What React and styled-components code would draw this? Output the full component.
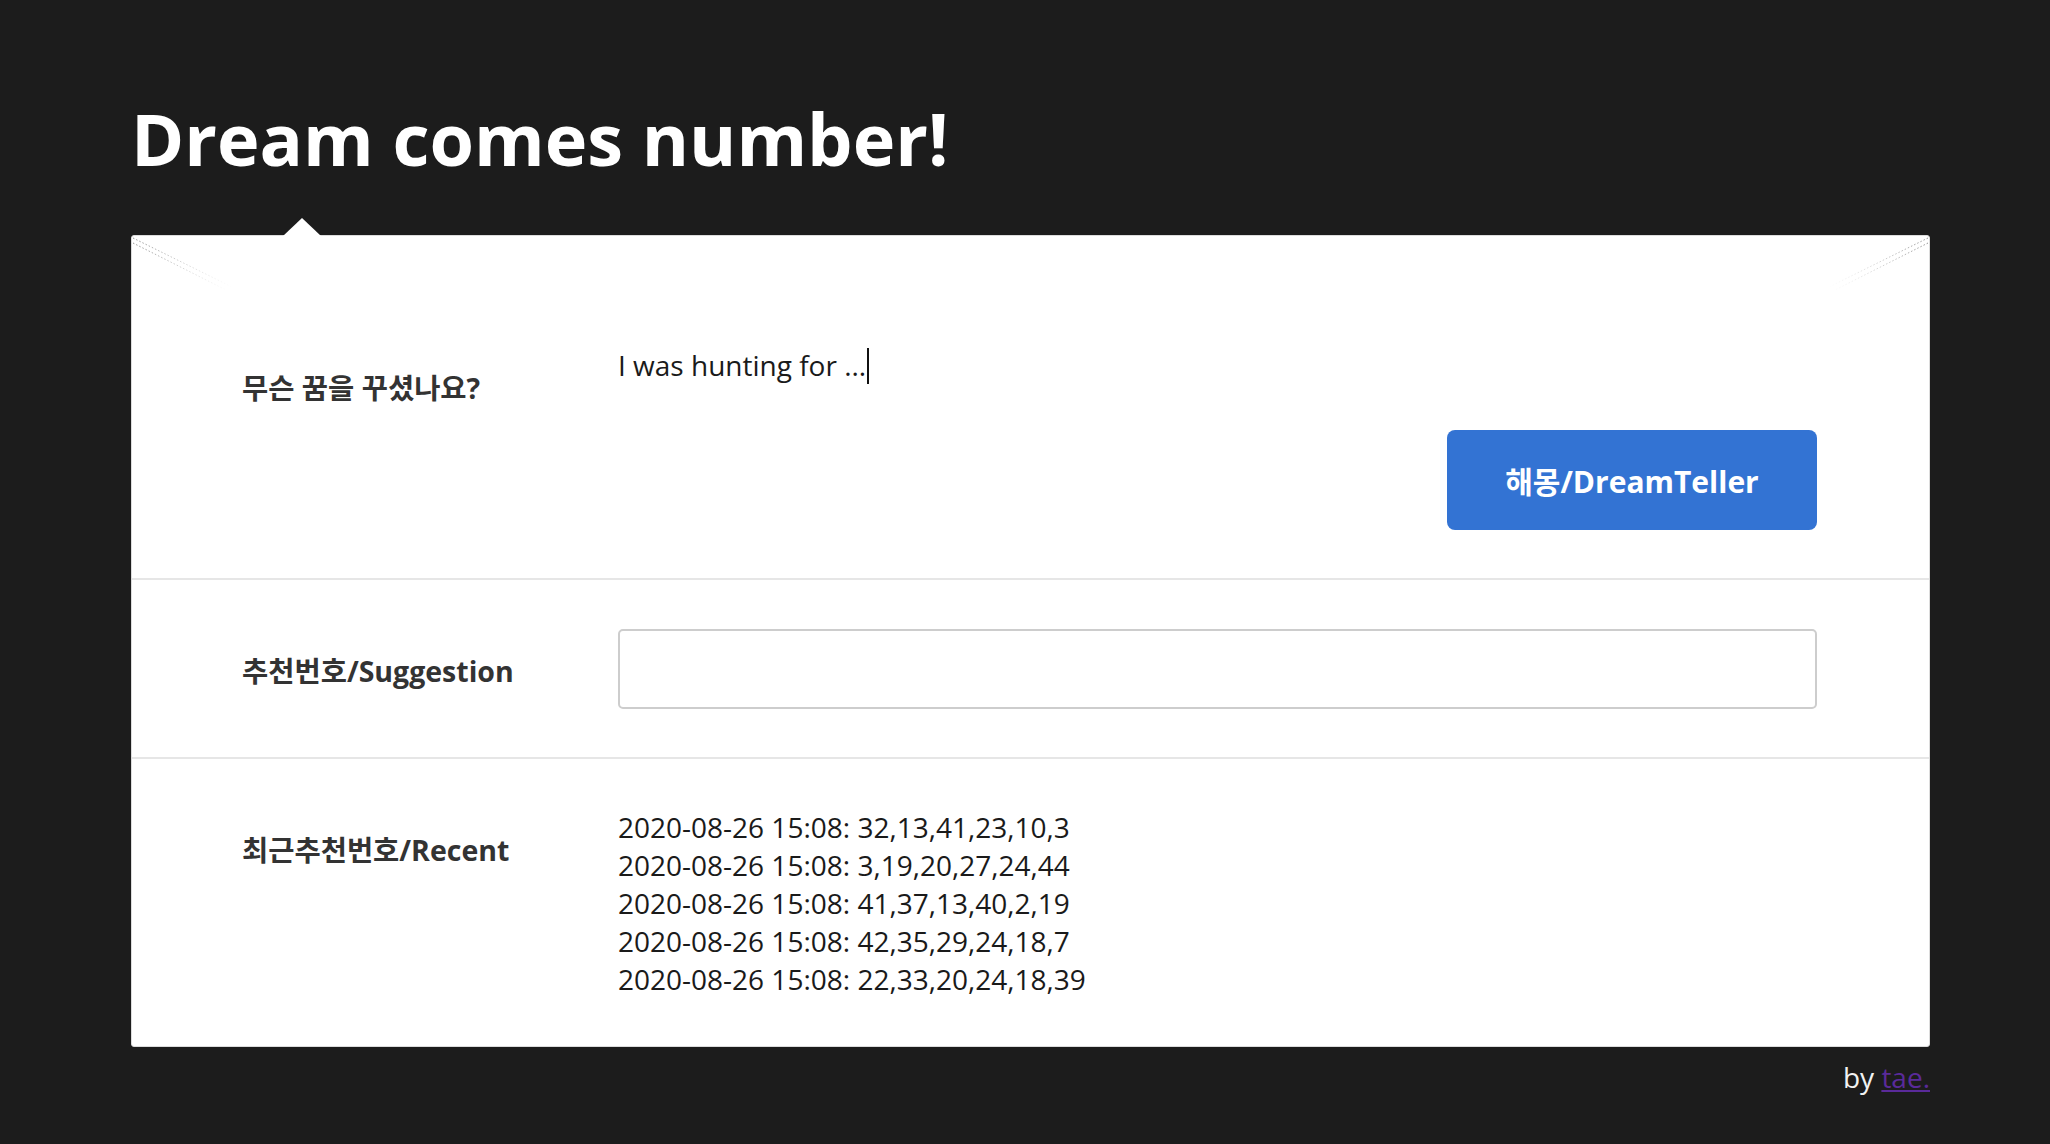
import React from "react";
import styled, {createGlobalStyle} from "styled-components";

const recent = [
    "2020-08-26 15:08: 32,13,41,23,10,3",
    "2020-08-26 15:08: 3,19,20,27,24,44",
    "2020-08-26 15:08: 41,37,13,40,2,19",
    "2020-08-26 15:08: 42,35,29,24,18,7",
    "2020-08-26 15:08: 22,33,20,24,18,39",
];

function Fold({side}) {
    return (
        <FoldMark side={side} width="110" height="60" viewBox="0 0 110 60">
            <defs>
                <linearGradient id={"fade-" + side} x1="0" y1="0" x2="1" y2="0">
                    <stop offset="0" stopColor="#888" stopOpacity="0.9"/>
                    <stop offset="1" stopColor="#bbb" stopOpacity="0"/>
                </linearGradient>
            </defs>
            <line x1="1" y1="1" x2="100" y2="50" stroke={`url(#fade-${side})`} strokeWidth="1" strokeDasharray="1.5 2"/>
            <line x1="1" y1="6" x2="96" y2="54" stroke={`url(#fade-${side})`} strokeWidth="1" strokeDasharray="1.5 2"/>
        </FoldMark>
    );
}

function App() {
    return (
        <Page>
            <GlobalStyle/>
            <Title>Dream comes number!</Title>
            <Card>
                <Pointer/>
                <Fold side="left"/>
                <Fold side="right"/>
                <Row>
                    <Label>무슨 꿈을 꾸셨나요?</Label>
                    <Field>
                        <DreamText>I was hunting for ...<Caret/></DreamText>
                        <ButtonLine>
                            <TellButton>해몽/DreamTeller</TellButton>
                        </ButtonLine>
                    </Field>
                </Row>
                <Row>
                    <Label>추천번호/Suggestion</Label>
                    <Field>
                        <NumberBox type="text" readOnly/>
                    </Field>
                </Row>
                <Row last>
                    <Label>최근추천번호/Recent</Label>
                    <Field>
                        {recent.map((r, i) => <RecentLine key={i}>{r}</RecentLine>)}
                    </Field>
                </Row>
            </Card>
            <Footer>by <a href="#">tae.</a></Footer>
        </Page>
    );
}

const GlobalStyle = createGlobalStyle`
  body {
    margin: 0;
    background: #1c1c1c;
    font-family: "Open Sans", "Noto Sans CJK KR", sans-serif;
  }
`;
const Page = styled.div`
  padding: 93px 120px 40px 131px;
`;
const Title = styled.h1`
  margin: 0 0 51px;
  color: #fff;
  font-size: 72px;
  font-weight: 700;
  line-height: 91px;
`;
const Card = styled.div`
  position: relative;
  width: 1799px;
  box-sizing: border-box;
  padding-top: 61px;
  background: #fff;
  border: 1px solid #dcdcdc;
  border-radius: 3px;
`;
const Pointer = styled.div`
  position: absolute;
  top: -18px;
  left: 151px;
  width: 0;
  height: 0;
  border-left: 19px solid transparent;
  border-right: 19px solid transparent;
  border-bottom: 18px solid #fff;
`;
const FoldMark = styled.svg`
  position: absolute;
  top: 1px;
  ${p => p.side === "left" ? "left: 0;" : "right: 0; transform: scaleX(-1);"}
`;
const Row = styled.div`
  display: grid;
  grid-template-columns: 376px 1fr;
  padding: 49px 112px 48px 110px;
  border-bottom: ${p => p.last ? "none" : "2px solid #e6e6e6"};
`;
const Label = styled.div`
  padding-top: 23px;
  color: #333;
  font-size: 28.5px;
  font-weight: 700;
  line-height: 38px;
`;
const Field = styled.div`
  display: flex;
  flex-direction: column;
`;
const DreamText = styled.div`
  color: #1a1a1a;
  font-size: 28px;
  line-height: 38px;
`;
const Caret = styled.span`
  display: inline-block;
  width: 2px;
  height: 36px;
  margin-left: 1px;
  vertical-align: -8px;
  background: #111;
`;
const ButtonLine = styled.div`
  display: flex;
  justify-content: flex-end;
  margin-top: 46px;
`;
const TellButton = styled.button`
  width: 370px;
  height: 100px;
  border: none;
  border-radius: 8px;
  background: #3373d3;
  color: #fff;
  font-family: "Open Sans", "Noto Sans CJK KR", sans-serif;
  font-size: 30px;
  font-weight: 700;
  cursor: pointer;
`;
const NumberBox = styled.input`
  height: 80px;
  box-sizing: border-box;
  border: 2px solid #cdcdcd;
  border-radius: 5px;
  outline: none;
  padding: 0 20px;
  font-family: "Open Sans", sans-serif;
  font-size: 28px;
`;
const RecentLine = styled.div`
  color: #1a1a1a;
  font-size: 28px;
  line-height: 38px;
`;
const Footer = styled.div`
  width: 1799px;
  margin-top: 10px;
  text-align: right;
  color: #f2f2f2;
  font-size: 28px;
  line-height: 40px;
  a {
    color: #5a2a9a;
  }
`;

export default App;
